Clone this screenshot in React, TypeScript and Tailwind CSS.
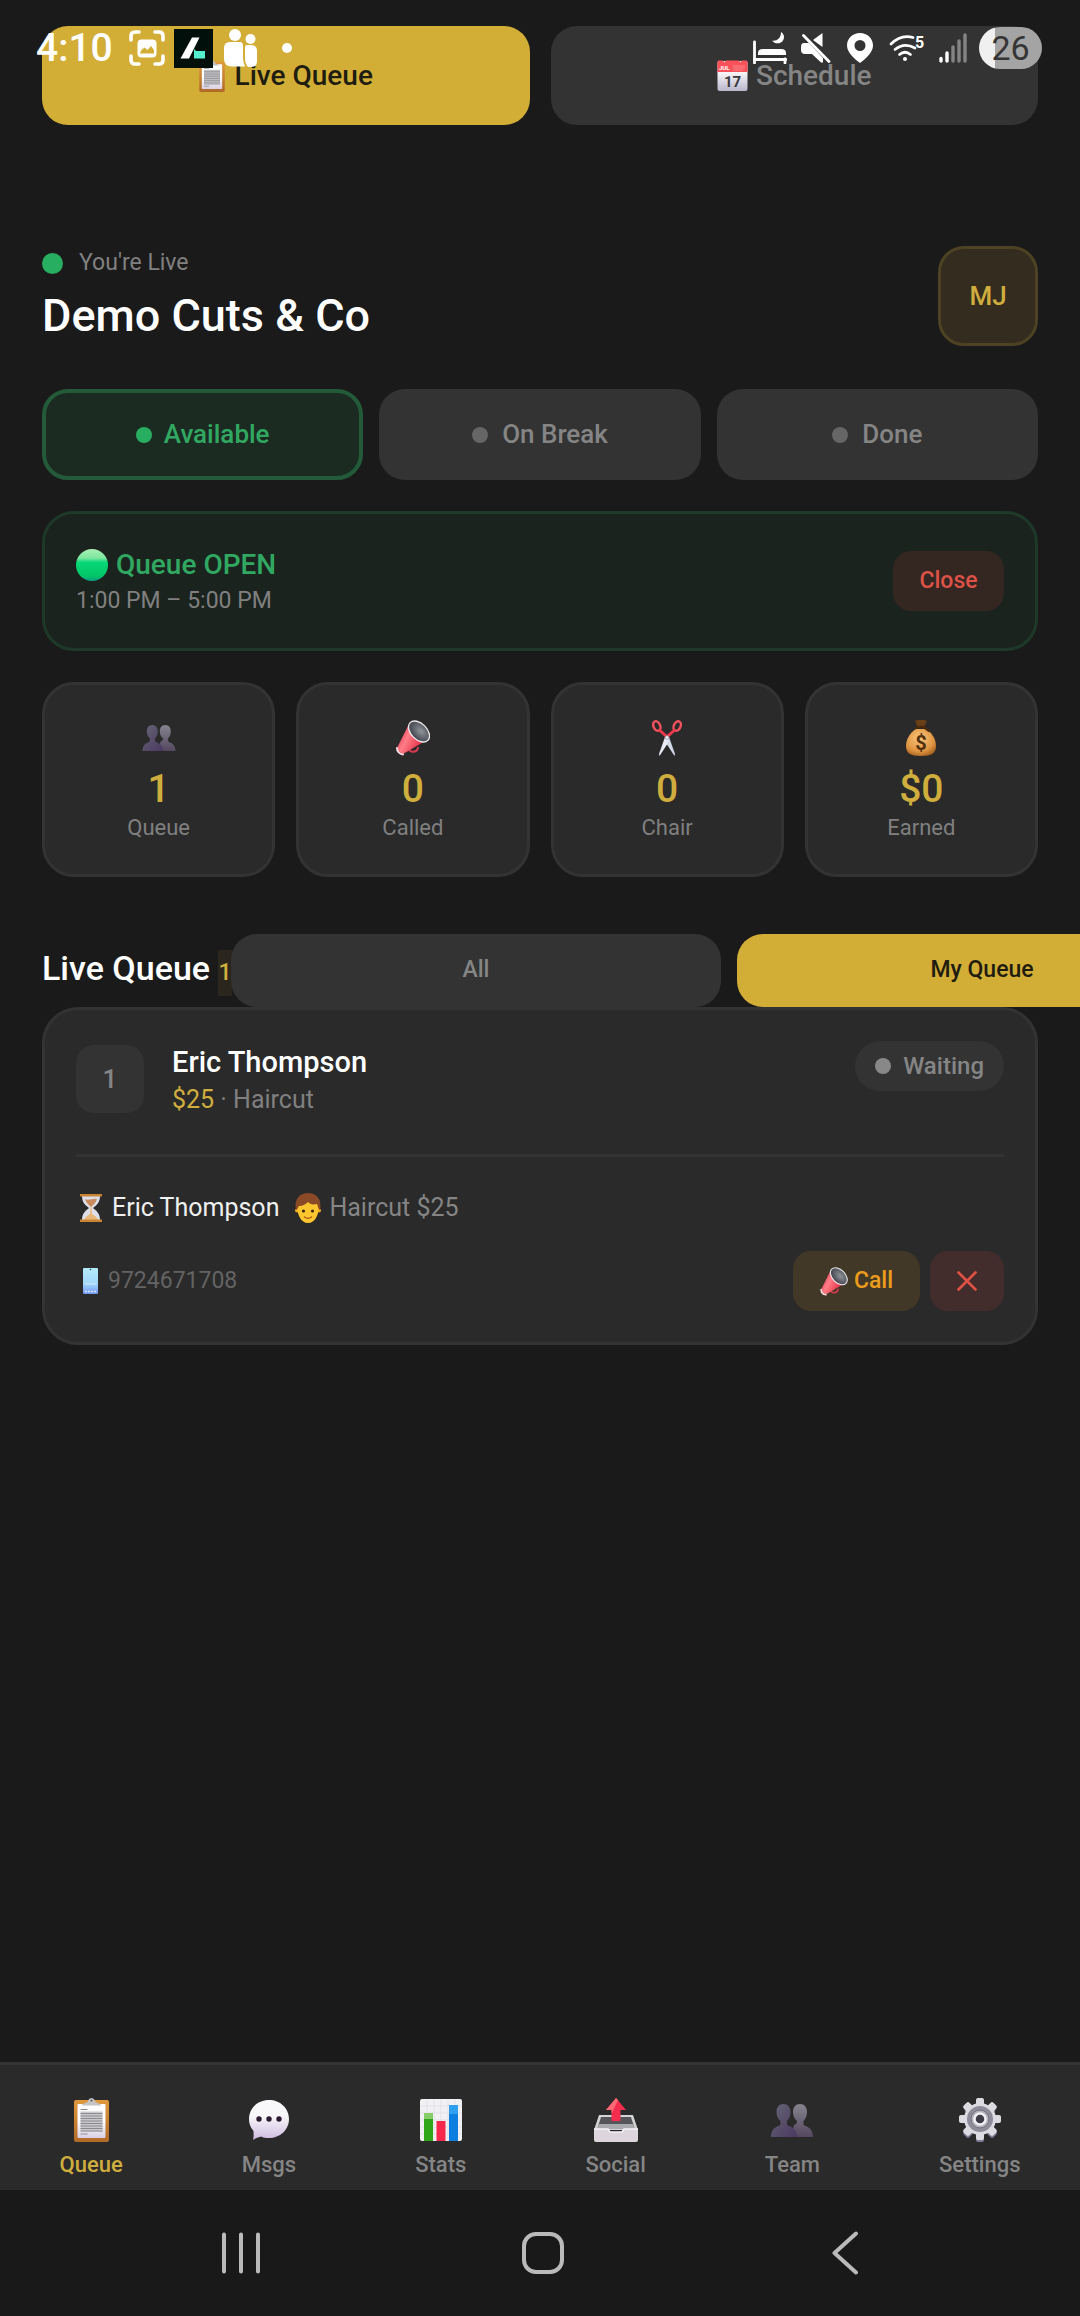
import React from "react";

interface IconProps {
  className?: string;
}

const ClipboardIcon: React.FC<IconProps> = ({ className }) => (
  <svg viewBox="0 0 35 44" className={className} aria-hidden="true">
    <defs>
      <linearGradient id="board" x1="0" y1="0" x2="0" y2="1">
        <stop offset="0" stopColor="#e09a3c" />
        <stop offset="1" stopColor="#b06a28" />
      </linearGradient>
      <linearGradient id="paper" x1="0" y1="0" x2="0" y2="1">
        <stop offset="0.5" stopColor="#fdfdfd" />
        <stop offset="1" stopColor="#d8d0e4" />
      </linearGradient>
    </defs>
    <rect y="2" width="35" height="42" rx="2" fill="url(#board)" />
    <rect x="3.5" y="6" width="28" height="34" rx="1" fill="url(#paper)" />
    <path d="M8 7.500c0-2 4-2.500 5.500-3.500C14.500 1 16 0 17.500 0S20.500 1 21.500 4c1.500 1 5.500 1.500 5.500 3.500z" fill="#c4c4c6" />
    <circle cx="17.5" cy="2.4" r="1" fill="#555" />
    <path d="M6.500 11.500h7M6.500 36h7" stroke="#8f8f96" strokeWidth="1.2" />
    <rect x="6.5" y="13.5" width="22" height="20" fill="#c9c9cc" />
    <path d="M6.500 15.500h22M6.500 18h22M6.500 20.500h22M6.500 23h22M6.500 25.500h22M6.500 28h22M6.500 30.500h22M6.500 33h22" stroke="#8b8b90" strokeWidth="1.1" />
  </svg>
);

const CalendarIcon: React.FC<IconProps> = ({ className }) => (
  <svg viewBox="0 0 31 31" className={className} aria-hidden="true">
    <defs>
      <linearGradient id="page" x1="0" y1="0" x2="0" y2="1">
        <stop offset="0.4" stopColor="#f5f5f7" />
        <stop offset="1" stopColor="#b9b6cc" />
      </linearGradient>
    </defs>
    <rect x="0.5" y="1" width="30" height="30" rx="2" fill="url(#page)" />
    <path d="M0.500 12V2.500C.5 1 1 .5 2.500.5H6l1.500 2L9 .5h13l1.500 2L25 .5h3.500c1.500 0 2 .5 2 2V12z" fill="#f9525a" />
    <path d="M16.500 6h12M16.500 8h12M16.500 10h9" stroke="#fdb4b8" strokeWidth="1" strokeDasharray="1 1" />
    <text x="2" y="9.5" fontSize="6" fontWeight="700" fill="#fff" fontFamily="Roboto">JUL</text>
    <text x="15.5" y="27" fontSize="15" fontWeight="700" fill="#3a3a3e" textAnchor="middle" fontFamily="Roboto">17</text>
  </svg>
);

const PeopleIcon: React.FC<IconProps> = ({ className }) => (
  <svg viewBox="0 0 42 33" className={className} aria-hidden="true">
    <defs>
      <linearGradient id="personBack" x1="0" y1="0" x2="0" y2="1">
        <stop offset="0" stopColor="#85848e" />
        <stop offset="1" stopColor="#54475f" />
      </linearGradient>
      <linearGradient id="personFront" x1="0" y1="0" x2="1" y2="1">
        <stop offset="0" stopColor="#666675" />
        <stop offset="1" stopColor="#4a3860" />
      </linearGradient>
    </defs>
    <path d="M29 0c4.500 0 7 3.500 7 8 0 4-1.500 7-3.500 9v3c0 3 9.500 1.500 9.500 13H20l3-12c2.500-1 3-1.500 3-4-2.500-2-4-5-4-9 0-4.500 2.500-8 7-8z" fill="url(#personBack)" />
    <path d="M12.500 0c4.500 0 7 3.500 7 8 0 4-1.500 7-3.500 9v3c0 3 10 1.500 10 13H0c0-11.500 9.500-10 9.500-13v-3C7 15 5.500 12 5.500 8c0-4.500 2.500-8 7-8z" fill="url(#personFront)" />
  </svg>
);

const MegaphoneIcon: React.FC<IconProps> = ({ className }) => (
  <svg viewBox="0 0 34 36" className={className} aria-hidden="true">
    <defs>
      <linearGradient id="horn" x1="0" y1="0" x2="1" y2="0.5">
        <stop offset="0.1" stopColor="#e02c46" />
        <stop offset="0.45" stopColor="#ff7d86" />
        <stop offset="1" stopColor="#e0243e" />
      </linearGradient>
      <radialGradient id="bell" cx="0.55" cy="0.4">
        <stop offset="0" stopColor="#90949a" />
        <stop offset="1" stopColor="#4a4d55" />
      </radialGradient>
    </defs>
    <path d="M13 29c0 4 9 4 9-2" fill="none" stroke="#d93a50" strokeWidth="2" />
    <path d="M13 4L1 28c1 3 3 5 6 6L31 20z" fill="url(#horn)" />
    <path d="M1 28c0 3 2 6 6 6.500" fill="none" stroke="#f3dde0" strokeWidth="2" strokeLinecap="round" />
    <ellipse cx="23" cy="11.5" rx="12.5" ry="8" transform="rotate(45 23 11.500)" fill="url(#bell)" stroke="#ececee" strokeWidth="1.3" />
  </svg>
);

const ScissorsIcon: React.FC<IconProps> = ({ className }) => (
  <svg viewBox="0 0 30 36" className={className} aria-hidden="true">
    <path d="M13 15l4 2 6 17-.5 2L14 23z" fill="#d3d8e8" />
    <path d="M17 15l-4 2L7 34l.5 2L16 23z" fill="#e8ebf5" />
    <ellipse cx="4.8" cy="6" rx="3.3" ry="5" transform="rotate(-25 4.800 6)" fill="none" stroke="#f4525f" strokeWidth="2.4" />
    <ellipse cx="25.2" cy="6" rx="3.3" ry="5" transform="rotate(25 25.200 6)" fill="none" stroke="#f4525f" strokeWidth="2.4" />
    <path d="M8 10.500l6 5.500M22 10.500L16 16" stroke="#f03a4c" strokeWidth="3" strokeLinecap="round" />
    <circle cx="15" cy="17.5" r="1.8" fill="#f4f4f8" stroke="#8f93a3" strokeWidth="0.8" />
  </svg>
);

const MoneyBagIcon: React.FC<IconProps> = ({ className }) => (
  <svg viewBox="0 0 30 36" className={className} aria-hidden="true">
    <defs>
      <radialGradient id="sack" cx="0.45" cy="0.35" r="0.7">
        <stop offset="0" stopColor="#fbc57c" />
        <stop offset="0.7" stopColor="#de9440" />
        <stop offset="1" stopColor="#a35f1e" />
      </radialGradient>
    </defs>
    <path d="M10 9C4 13 0 19 0 26c0 7 4 10 15 10s15-3 15-10c0-7-4-13-10-17z" fill="url(#sack)" />
    <path d="M9 1c3-1.500 9-1.500 12 0l-2.500 5h-7z" fill="#6b3f16" />
    <path d="M10 8c3-1.500 7-1.500 10 0M19 8l4 3" stroke="#4a2a0c" strokeWidth="2.2" fill="none" strokeLinecap="round" />
    <text x="15" y="29.5" fontSize="20" fontWeight="700" fill="#53300c" textAnchor="middle" fontFamily="Roboto">$</text>
  </svg>
);

const GreenCircleIcon: React.FC<IconProps> = ({ className }) => (
  <svg viewBox="0 0 32 32" className={className} aria-hidden="true">
    <defs>
      <linearGradient id="green" x1="0" y1="0" x2="0" y2="1">
        <stop offset="0" stopColor="#a8f0b4" />
        <stop offset="0.28" stopColor="#7fe6a0" />
        <stop offset="0.42" stopColor="#06d877" />
        <stop offset="0.85" stopColor="#02c567" />
        <stop offset="1" stopColor="#0c9c86" />
      </linearGradient>
    </defs>
    <circle cx="16" cy="16" r="16" fill="url(#green)" />
  </svg>
);

const HourglassIcon: React.FC<IconProps> = ({ className }) => (
  <svg viewBox="0 0 22 28" className={className} aria-hidden="true">
    <path d="M2 2h18c0 6-3 9-7 12 4 3 7 6 7 12H2c0-6 3-9 7-12-4-3-7-6-7-12z" fill="#dde0ea" />
    <path d="M5 5c3 2 8-1 12 0-1 4-4 6-6 8-2-2-5-4-6-8z" fill="#c98a5c" />
    <path d="M10.500 13h1l.5 7c2 1 5 3 6 6H4c1-3 4-5 6-6z" fill="#e9b878" />
    <path d="M0 1.300h22M0 26.700h22" stroke="#c98434" strokeWidth="2.6" />
  </svg>
);

const FaceIcon: React.FC<IconProps> = ({ className }) => (
  <svg viewBox="0 0 26 30" className={className} aria-hidden="true">
    <circle cx="2" cy="17.5" r="2" fill="#f0a91e" />
    <circle cx="24" cy="17.5" r="2" fill="#f0a91e" />
    <path d="M2 12c0 10 4 18 11 18s11-8 11-18c0-5-5-8-11-8S2 7 2 12z" fill="#fdc62f" />
    <path d="M1 17C-1 7 4 0 13 0s14 7 12 17c-2-1-2-4-3-6-5 1-7 0-9-2-2 2-5 4-9 4-1 1-1 3-3 4z" fill="#8a4a28" />
    <circle cx="8.5" cy="18" r="1.6" fill="#3c2415" />
    <circle cx="17.5" cy="18" r="1.6" fill="#3c2415" />
    <path d="M9.500 24c2 1.500 5 1.500 7 0" stroke="#a35318" strokeWidth="1.3" fill="none" strokeLinecap="round" />
  </svg>
);

const PhoneIcon: React.FC<IconProps> = ({ className }) => (
  <svg viewBox="0 0 15 26" className={className} aria-hidden="true">
    <defs>
      <linearGradient id="screen" x1="0" y1="0" x2="0" y2="1">
        <stop offset="0" stopColor="#b4ecf8" />
        <stop offset="0.6" stopColor="#a3d8fb" />
        <stop offset="1" stopColor="#7397f2" />
      </linearGradient>
    </defs>
    <rect width="15" height="26" rx="1" fill="url(#screen)" />
    <circle cx="7.5" cy="1.5" r="0.8" fill="#24446b" />
    <path d="M2 16h11" stroke="#d8ecfb" strokeWidth="1" />
    <path d="M2 23.500h11" stroke="#d8e4fb" strokeWidth="1.6" strokeDasharray="2 1" />
  </svg>
);

const ChatIcon: React.FC<IconProps> = ({ className }) => (
  <svg viewBox="0 0 40 40" className={className} aria-hidden="true">
    <defs>
      <linearGradient id="bubble" x1="0" y1="0" x2="0" y2="1">
        <stop offset="0.4" stopColor="#f8f7f9" />
        <stop offset="1" stopColor="#cdbadf" />
      </linearGradient>
    </defs>
    <path d="M20 0C31 0 40 8 40 19S31 38 20 38c-3 0-6-.5-8-1.500-2 .5-5 1.500-8 3.500 1-4 .5-7 .5-9C1 27 0 23 0 19 0 8 9 0 20 0z" fill="url(#bubble)" />
    <circle cx="10" cy="19" r="2.7" fill="#2b1b33" />
    <circle cx="20" cy="19" r="2.7" fill="#2b1b33" />
    <circle cx="30" cy="19" r="2.7" fill="#2b1b33" />
  </svg>
);

const ChartIcon: React.FC<IconProps> = ({ className }) => (
  <svg viewBox="0 0 42 42" className={className} aria-hidden="true">
    <rect width="42" height="42" rx="2" fill="#f1f1f4" />
    <path d="M0 7h42M0 14h42M0 21h42M0 28h42M0 35h42M7 0v42M14 0v42M21 0v42M28 0v42M35 0v42" stroke="#dcdce2" strokeWidth="0.7" />
    <rect x="4" y="14" width="9" height="28" fill="#2fa617" />
    <rect x="4" y="14" width="9" height="6" fill="#86cc6a" />
    <rect x="16.5" y="22" width="9" height="20" fill="#f5274a" />
    <rect x="29" y="6" width="9" height="36" fill="#0d7fe0" />
    <rect x="29" y="6" width="9" height="9" fill="#2f9ff0" />
  </svg>
);

const OutboxIcon: React.FC<IconProps> = ({ className }) => (
  <svg viewBox="0 0 44 44" className={className} aria-hidden="true">
    <path d="M5 17h34l5 15H0z" fill="#d4d4d4" />
    <path d="M7 19h30l3.500 11h-37z" fill="#55565a" />
    <path d="M5 26h34l2 5H3z" fill="#a9aaad" />
    <path d="M0 31h14l2 3h12l2-3h14v11q0 2-2 2H2q-2 0-2-2z" fill="#ddd5dc" />
    <path d="M0 31h14l2 3h12l2-3h14" fill="none" stroke="#f6f4f6" strokeWidth="1.5" />
    <path d="M22 0l10 12h-5.500v11h-9V12H12z" fill="#f42c4e" />
    <path d="M22 0L12 12h5.500v4L24 2z" fill="#fb6a74" />
  </svg>
);

const GearIcon: React.FC<IconProps> = ({ className }) => (
  <svg viewBox="0 0 44 44" className={className} aria-hidden="true">
    <g fill="#807c94" transform="translate(0 2)">
      <rect x="18" y="2" width="8" height="40" rx="2" />
      <rect x="18" y="2" width="8" height="40" rx="2" transform="rotate(45 22 21)" />
      <rect x="18" y="2" width="8" height="40" rx="2" transform="rotate(-45 22 21)" />
    </g>
    <g fill="#dcdbe1">
      <rect x="18" y="0" width="8" height="42" rx="2" />
      <rect x="18" y="0" width="8" height="42" rx="2" transform="rotate(45 22 21)" />
      <rect x="18" y="0" width="8" height="42" rx="2" transform="rotate(90 22 21)" />
      <rect x="18" y="0" width="8" height="42" rx="2" transform="rotate(135 22 21)" />
      <circle cx="22" cy="21" r="16" />
    </g>
    <circle cx="22" cy="21" r="13" fill="#8d8c98" />
    <circle cx="22" cy="21" r="9" fill="#b5b4be" stroke="#74727f" strokeWidth="1" />
    <circle cx="22" cy="21" r="5.5" fill="#3d3b45" stroke="#efeff3" strokeWidth="2.5" />
  </svg>
);

const StatusBar: React.FC = () => (
  <div className="pointer-events-none absolute inset-x-0 top-0 z-10 flex h-24 items-center justify-between pr-[38px] pl-9 text-white">
    <div className="flex items-center">
      <span className="w-[93px] text-[39px] leading-none font-medium">4:10</span>
      <svg viewBox="0 0 36 36" className="h-9 w-9" aria-hidden="true">
        <path d="M2 10V6q0-4 4-4h4M26 2h4q4 0 4 4v4M34 26v4q0 4-4 4h-4M10 34H6q-4 0-4-4v-4" fill="none" stroke="#fff" strokeWidth="3.6" strokeLinecap="round" />
        <rect x="8.5" y="9.5" width="19" height="18" rx="4" fill="#fff" />
        <path d="M11 23.500l1-3 3.500-3 3 2.500L22 16l3 4v3.500z" fill="#d2ae37" />
      </svg>
      <svg viewBox="0 0 39 39" className="ml-[9px] h-[39px] w-[39px]" aria-hidden="true">
        <rect width="39" height="39" fill="#02100b" />
        <path d="M18 8.500h7.500L15 29.500H6.500z" fill="#fff" />
        <path d="M20 20l2 2h9v7.500H20z" fill="#52f0cd" />
      </svg>
      <svg viewBox="0 0 34 38" className="ml-[11px] h-[38px] w-[34px]" aria-hidden="true">
        <g fill="#fff">
          <circle cx="11" cy="6" r="6" />
          <path d="M6 13h10q3 0 3 4v11q0 6 2 9.500H8q-8 0-8-8V19q0-6 6-6z" />
          <circle cx="26.5" cy="10" r="5" />
          <path d="M21 18q0-2 2-2h4q6 0 6 6v10q0 6-6 6h-3q-3-3-3-9z" />
        </g>
      </svg>
      <span className="ml-6 h-[10px] w-[10px] rounded-full bg-white" />
    </div>
    <div className="flex items-center">
      <svg viewBox="0 0 34 32" className="h-8 w-[34px]" aria-hidden="true">
        <path d="M1.500 10v21M1 27.500h32M32 27v4" stroke="#fff" strokeWidth="2.8" strokeLinecap="round" />
        <path d="M5 23v-2q0-4 5-4h18q5 0 5 4v2z" fill="#fff" />
        <path d="M28 0c3 2 4 5 2 8.500-2 3.500-8 4-11 0C23 9.500 28 7 28 0z" fill="#fff" />
      </svg>
      <svg viewBox="0 0 30 30" className="ml-[14px] h-[30px] w-[30px]" aria-hidden="true">
        <path d="M0 14q0-4 3-4h5L22 25v4.500h-2L11 21H4q-4 0-4-4zM12 7l9.500-7v14z" fill="#fff" />
        <path d="M2.500 2.500l25.500 26" stroke="#fff" strokeWidth="2.8" strokeLinecap="round" />
      </svg>
      <svg viewBox="0 0 26 30" className="ml-4 h-[30px] w-[26px]" aria-hidden="true">
        <path fillRule="evenodd" d="M13 0c7 0 13 5 13 12.500C26 20 18 26 13 30 8 26 0 20 0 12.500 0 5 6 0 13 0zm0 7a5.500 5.500 0 1 0 0 11 5.500 5.500 0 0 0 0-11z" fill="#fff" />
      </svg>
      <svg viewBox="0 0 36 30" className="ml-4 h-[30px] w-9 overflow-visible" aria-hidden="true">
        <g fill="none" stroke="#fff" strokeWidth="2.7" strokeLinecap="round">
          <path d="M2 11Q12 1 24 4.500M6 16.500Q15 9 26 15M10.500 21.500Q16 17 21.500 21.500" />
        </g>
        <circle cx="16" cy="26" r="2" fill="#fff" />
        <text x="26" y="15" fontSize="16" fontWeight="700" fill="#fff" fontFamily="Roboto">5</text>
      </svg>
      <svg viewBox="0 0 28 30" className="ml-[14px] h-[30px] w-7" aria-hidden="true">
        <path d="M2 25.500v2.500M8 20v8" stroke="#fff" strokeWidth="3.4" strokeLinecap="round" />
        <path d="M14 14v14M20 8v20M26 2v26" stroke="#848484" strokeWidth="3.4" strokeLinecap="round" />
      </svg>
      <span className="ml-3 flex h-[42px] w-[63px] items-center justify-center rounded-full bg-linear-to-r from-[#f0f0f0] from-25% to-[#a4a4a4] to-25% text-[34px] leading-none text-[#353535]">
        26
      </span>
    </div>
  </div>
);

interface StatProps {
  icon: React.ReactNode;
  value: string;
  label: string;
}

const StatCard: React.FC<StatProps> = ({ icon, value, label }) => (
  <div className="flex h-[195px] flex-col items-center rounded-[32px] border-[3px] border-[#333] bg-[#2a2a2a] pt-[35px]">
    <div className="flex h-9 items-center">{icon}</div>
    <div className="mt-2 text-[39px] leading-[50px] font-medium text-[#d0ae3e]">{value}</div>
    <div className="text-[22px] leading-7 text-[#808080]">{label}</div>
  </div>
);

const stats: StatProps[] = [
  { icon: <PeopleIcon className="h-[26px] w-[34px]" />, value: "1", label: "Queue" },
  { icon: <MegaphoneIcon className="h-9 w-[34px]" />, value: "0", label: "Called" },
  { icon: <ScissorsIcon className="h-9 w-[30px]" />, value: "0", label: "Chair" },
  { icon: <MoneyBagIcon className="h-9 w-[30px]" />, value: "$0", label: "Earned" },
];

const navItems = [
  { label: "Queue", icon: <ClipboardIcon className="h-11 w-[35px]" />, active: true },
  { label: "Msgs", icon: <ChatIcon className="h-10 w-10" />, active: false },
  { label: "Stats", icon: <ChartIcon className="h-[42px] w-[42px]" />, active: false },
  { label: "Social", icon: <OutboxIcon className="h-11 w-11" />, active: false },
  { label: "Team", icon: <PeopleIcon className="h-[33px] w-[42px]" />, active: false },
  { label: "Settings", icon: <GearIcon className="h-11 w-11" />, active: false },
];

const CustomerCard: React.FC = () => (
  <article className="rounded-[36px] border-[3px] border-[#333] bg-[#2a2a2a] p-[31px]">
    <div className="flex items-center border-b-[3px] border-[#333] pb-[37px]">
      <div className="flex h-[68px] w-[68px] items-center justify-center rounded-[18px] bg-[#333] text-[26px] font-medium text-[#858585]">
        1
      </div>
      <div className="ml-7 flex-1">
        <h3 className="text-[29px] leading-[42px] font-medium">Eric Thompson</h3>
        <p className="text-[25px] leading-[34px] text-[#808080]">
          <span className="text-[#d0ae3e]">$25</span> · Haircut
        </p>
      </div>
      <span className="flex h-[50px] items-center gap-3 self-start rounded-full bg-[#333] px-5 text-2xl font-medium text-[#858585]">
        <span className="h-4 w-4 rounded-full bg-[#888]" />
        Waiting
      </span>
    </div>

    <div className="mt-[33px] flex h-9 items-center pl-1 text-[25px] text-[#858585]">
      <HourglassIcon className="h-7 w-[22px]" />
      <span className="ml-[10px] text-[#f0f0f0]">Eric Thompson</span>
      <FaceIcon className="ml-4 h-[30px] w-[26px]" />
      <span className="ml-2">Haircut $25</span>
    </div>

    <div className="mt-[25px] flex items-center justify-between">
      <div className="flex items-center gap-[10px] pl-[7px] text-[23px] text-[#636363]">
        <PhoneIcon className="h-[26px] w-[15px]" />
        9724671708
      </div>
      <div className="flex gap-[10px]">
        <button className="flex h-[60px] w-[127px] items-center justify-center gap-[6px] rounded-[18px] bg-[#423827] text-[23px] font-medium text-[#ec9c1c]">
          <MegaphoneIcon className="h-[29px] w-7" />
          Call
        </button>
        <button
          aria-label="Remove"
          className="flex h-[60px] w-[74px] items-center justify-center rounded-[18px] bg-[#422c2c]"
        >
          <svg viewBox="0 0 20 20" className="h-5 w-5" aria-hidden="true">
            <path d="M1.500 1.500l17 17M18.500 1.500l-17 17" stroke="#e05244" strokeWidth="2.6" strokeLinecap="round" />
          </svg>
        </button>
      </div>
    </div>
  </article>
);

const App: React.FC = () => {
  return (
    <div className="relative flex min-h-screen flex-col overflow-x-hidden bg-[#1a1a1a] font-['Roboto',sans-serif] text-white">
      <StatusBar />

      <main className="flex-1 px-[42px] pt-[26px]">
        {/* View tabs */}
        <div className="grid grid-cols-2 gap-[21px] text-[28px] font-medium">
          <button className="flex h-[99px] items-center justify-center gap-[10px] rounded-[26px] bg-[#d2ae37] text-[#1f1c10]">
            <ClipboardIcon className="h-8 w-[26px]" />
            Live Queue
          </button>
          <button className="flex h-[99px] items-center justify-center gap-2 rounded-[26px] bg-[#333] text-[#858585]">
            <CalendarIcon className="h-[31px] w-[31px]" />
            Schedule
          </button>
        </div>

        {/* Shop header */}
        <header className="mt-[121px] flex items-center justify-between">
          <div>
            <div className="flex h-[34px] items-center gap-4 text-[23px] text-[#808080]">
              <span className="h-[21px] w-[21px] rounded-full bg-[#28ae60]" />
              You're Live
            </div>
            <h1 className="mt-[6px] text-[45px] leading-[60px] font-medium">Demo Cuts &amp; Co</h1>
          </div>
          <button className="h-[100px] w-[100px] rounded-[26px] border-[3px] border-[#4d4223] bg-[#342c1e] text-[26px] font-medium text-[#d0ae3e]">
            MJ
          </button>
        </header>

        {/* Availability */}
        <div className="mt-[43px] grid grid-cols-3 gap-4 text-[26px] font-medium">
          <button className="flex h-[91px] items-center justify-center gap-3 rounded-[26px] border-4 border-[#235a39] bg-[#1c2b22] text-[#31a862]">
            <span className="h-4 w-4 rounded-full bg-[#28ae60]" />
            Available
          </button>
          <button className="flex h-[91px] items-center justify-center gap-[14px] rounded-[26px] bg-[#333] text-[#858585]">
            <span className="h-4 w-4 rounded-full bg-[#666]" />
            On Break
          </button>
          <button className="flex h-[91px] items-center justify-center gap-[14px] rounded-[26px] bg-[#333] text-[#858585]">
            <span className="h-4 w-4 rounded-full bg-[#666]" />
            Done
          </button>
        </div>

        {/* Queue status */}
        <section className="mt-[31px] flex h-[140px] items-center justify-between rounded-[32px] border-[3px] border-[#1e3829] bg-[#1b231e] px-[31px]">
          <div className="pt-1">
            <div className="flex h-9 items-center gap-2 text-[28px] font-medium text-[#31a862]">
              <GreenCircleIcon className="h-8 w-8" />
              Queue OPEN
            </div>
            <div className="text-[23px] leading-9 text-[#808080]">1:00 PM – 5:00 PM</div>
          </div>
          <button className="h-[60px] w-[111px] rounded-[18px] bg-[#342722] text-[23px] font-medium text-[#dc5246]">
            Close
          </button>
        </section>

        {/* Stats */}
        <div className="mt-[31px] grid grid-cols-4 gap-[21px]">
          {stats.map((stat) => (
            <StatCard key={stat.label} {...stat} />
          ))}
        </div>

        {/* List header, the filters run off the right edge */}
        <div className="mt-[57px] flex items-center">
          <h2 className="w-[189px] shrink-0 text-[34px] leading-[46px] font-medium whitespace-nowrap">
            Live Queue{" "}
            <span className="inline-block bg-[#2a261d] text-[23px] leading-[46px] text-[#d0ae3e]">1</span>
          </h2>
          <div className="flex w-full shrink-0 gap-4 text-[23px] font-medium">
            <button className="h-[73px] w-full shrink rounded-[26px] bg-[#333] text-[#858585]">All</button>
            <button className="h-[73px] w-full shrink rounded-[26px] bg-[#d2ae37] text-[#1f1c10]">My Queue</button>
          </div>
        </div>

        <CustomerCard />
      </main>

      <nav className="flex justify-around border-t-[3px] border-[#333] bg-[#2a2a2a] pt-[33px] pb-[11px] text-[22px] leading-7 font-medium">
        {navItems.map((item) => (
          <button
            key={item.label}
            className={`flex flex-col items-center gap-[9px] ${item.active ? "text-[#d0ae3e]" : "text-[#858585]"}`}
          >
            <span className="flex h-11 items-center">{item.icon}</span>
            {item.label}
          </button>
        ))}
      </nav>

      {/* System navigation */}
      <div className="grid h-[126px] grid-cols-3 items-center justify-items-center bg-[#191919] pr-[84px] pl-[90px]">
        <button aria-label="Recent apps">
          <svg viewBox="0 0 38 42" className="h-[42px] w-[38px]" aria-hidden="true">
            <path d="M2 2.500v37M19 2.500v37M36 2.500v37" stroke="#bababa" strokeWidth="4" strokeLinecap="round" />
          </svg>
        </button>
        <button aria-label="Home">
          <svg viewBox="0 0 44 44" className="h-11 w-11" aria-hidden="true">
            <rect x="3" y="3" width="38" height="38" rx="12" fill="none" stroke="#bababa" strokeWidth="4" />
          </svg>
        </button>
        <button aria-label="Back">
          <svg viewBox="0 0 26 44" className="h-11 w-[26px]" aria-hidden="true">
            <path d="M24 2.500L2.500 22 24 41.500" fill="none" stroke="#bababa" strokeWidth="4" strokeLinecap="round" strokeLinejoin="round" />
          </svg>
        </button>
      </div>
    </div>
  );
};

export default App;
